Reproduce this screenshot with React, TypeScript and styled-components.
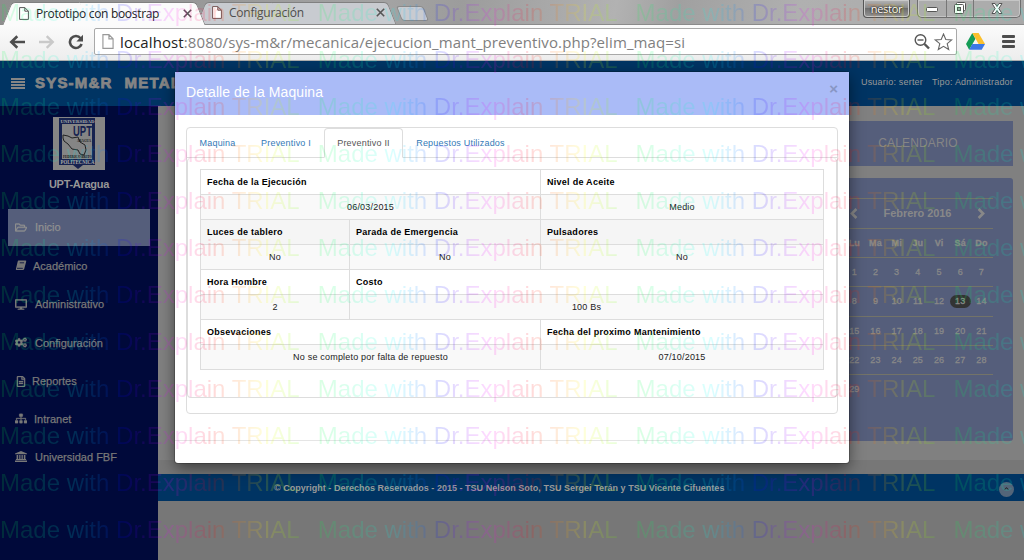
import React from 'react';
import styled, { createGlobalStyle } from 'styled-components';
import { FaRegFolderOpen, FaDesktop, FaCogs, FaRegFileAlt, FaSitemap, FaChevronUp } from 'react-icons/fa';

const Global = createGlobalStyle`
  * { box-sizing: border-box; }
  body { margin: 0; overflow: hidden; font-family: "Liberation Sans", Arial, sans-serif; }
`;
const Screen = styled.div`
  position: relative; width: 1024px; height: 560px; overflow: hidden;
  display: flex; flex-direction: column; background: #777;
`;

/* Browser window */
const TabStrip = styled.div`
  height: 25px; flex: none; display: flex; align-items: flex-start; padding-left: 7px;
  background: linear-gradient(100deg, #8e8e8e 0, #a3a3a3 38%, #9c9c9c 45%, #b2b2b2 60%, #a0a0a0 66%, #b0b0b0 78%, #a8a8a8 100%);
  border-bottom: 1px solid #8b8b8b;
  font-family: "Open Sans", "Liberation Sans", sans-serif;
`;
const BrowserTab = styled.div<{ $active?: boolean; $w: number }>`
  position: relative; z-index: ${p => (p.$active ? 2 : 1)};
  width: ${p => p.$w}px; height: ${p => (p.$active ? 23 : 22)}px; margin-top: 2px;
  display: flex; align-items: center; padding: 0 0 1px ${p => (p.$active ? 12 : 11)}px;
  font-size: 12px; letter-spacing: ${p => (p.$active ? '-0.31px' : '-0.24px')};
  color: ${p => (p.$active ? '#222' : '#4d4d4d')};
  &::before, &::after {
    content: ''; position: absolute; z-index: -1; top: 0; bottom: 0;
    background: ${p => (p.$active ? '#fbfbfb' : '#c8cbd0')}; border-top: 1px solid #808080;
  }
  &::before { left: 0; width: 60%; transform: skewX(-22deg); border-left: 1px solid #808080; border-radius: 4px 0 0 0; }
  &::after { right: 0; width: 60%; transform: skewX(22deg); border-right: 1px solid #808080; border-radius: 0 4px 0 0; }
`;
const TabLabel = styled.span`flex: 1; margin-left: 7px; white-space: nowrap;`;
const TabClose = styled.svg<{ $right: number }>`width: 9px; height: 9px; margin-right: ${p => p.$right}px;`;
const NewTab = styled.div`
  width: 27px; height: 15px; margin: 6px 0 0 7px; transform: skewX(22deg);
  background: #c9cbd0; border: 1px solid #8a8a8a; border-radius: 3px;
`;
const WindowControls = styled.div`display: flex; margin-left: auto; padding-right: 3px; height: 18px;`;
const UserBadge = styled.div`
  width: 47px; height: 18px; margin-right: 7px; border: 1px solid #555; border-top: 0; border-radius: 0 0 4px 4px;
  background: linear-gradient(#b5b5b5, #8a8a8a 45%, #6d6d6d 50%, #969696); color: #fff; text-align: center;
  font-size: 11px; letter-spacing: -0.3px; line-height: 17px; text-shadow: 0 0 2px #222, 0 0 2px #222; box-shadow: inset 0 0 0 1px #c9c9c9;
`;
const WindowButtons = styled.div`
  display: flex; height: 18px; border: 1px solid #6f6f6f; border-top: 0; border-radius: 0 0 5px 5px;
  box-shadow: inset 0 0 0 1px #c5c5c5; background: #acacac;
`;
const WindowButton = styled.div<{ $w: number; $drop?: number }>`
  width: ${p => p.$w}px; display: flex; align-items: center; justify-content: center; padding: ${p => p.$drop || 0}px 0 1px;
  & + & { border-left: 1px solid #777; }
`;
const Toolbar = styled.div`
  height: 36px; flex: none; display: flex; align-items: center; padding: 0 0 2px 9px;
  background: linear-gradient(#fbfbfb, #ededed); border-bottom: 1px solid #adadad;
`;
const NavIcon = styled.svg<{ $gap: number }>`width: 16px; height: 16px; margin-right: ${p => p.$gap}px; flex: none;`;
const AddressBar = styled.div`
  width: 863px; height: 27px; flex: none; display: flex; align-items: center; padding: 0 3px 0 7px;
  border: 1px solid #a9a9a9; border-radius: 2px; background: #fff;
  font-family: "Open Sans", "Liberation Sans", sans-serif; font-size: 15px; color: #808080;
`;
const Url = styled.span`flex: 1; margin-left: 6px; letter-spacing: 0.105px; white-space: nowrap; b { font-weight: 400; color: #222; }`;
const BarIcon = styled.svg`flex: none;`;

/* Application */
const Header = styled.header`
  height: 45px; flex: none; display: flex; align-items: center; background: #003463; color: #858585;
  padding: 0 11px 2px 11px;
`;
const Brand = styled.div`
  display: flex; align-items: center; font-size: 15px; font-weight: 700; letter-spacing: 1.2px; white-space: pre; width: 300px;
  -webkit-text-stroke: 0.8px #858585;
  svg { width: 14px; height: 11px; margin: 2px 10px 0 0; flex: none; }
`;
const BrandName = styled.span`margin-right: 12px;`;
const Avatar = styled.div`
  width: 26px; height: 26px; margin: 6px 13px 0 auto; border-radius: 50%; background: #777;
  display: flex; justify-content: center; padding-top: 4px;
  &::after { content: ''; width: 9px; height: 10px; border-radius: 50%; background: #222; }
`;
const UserInfo = styled.div`display: flex; gap: 9px; font-size: 9px; letter-spacing: 0.2px; color: #999; padding-bottom: 1px;`;
const Body = styled.div`flex: 1; min-height: 0; display: flex;`;
const Sidebar = styled.nav`
  width: 158px; flex: none; background: #00093a; color: #787878; display: flex; flex-direction: column; align-items: center; padding-top: 11px;
`;
const Logo = styled.svg`width: 52px; height: 53px; flex: none;`;
const School = styled.div`margin: 8px 0 19px; height: 12px; line-height: 12px; font-size: 11px; letter-spacing: -0.28px; font-weight: 700; color: #969696;`;
const NavItem = styled.a<{ $active?: boolean; $gap: number; $h: number }>`
  width: 142px; height: ${p => p.$h}px; flex: none; display: flex; align-items: center; padding: 0 0 1px 7px; gap: ${p => p.$gap}px;
  font-size: 11px; color: ${p => (p.$active ? '#909090' : '#787878')};
  background: ${p => (p.$active ? '#555e7b' : 'transparent')}; -webkit-text-stroke: 0.25px currentColor;
  svg { width: 12px; height: 11px; flex: none; stroke: currentColor; stroke-width: 14px; }
  svg.fine { stroke-width: 0; }
`;
const Main = styled.main`flex: 1; display: flex; flex-direction: column; background: #777;`;
const Content = styled.div`
  height: 354px; flex: none; display: flex; flex-direction: column; align-items: flex-end; padding: 15px 11px 0 0; background: #808080;
`;
const CardTitle = styled.div`
  width: 190px; height: 45px; background: #555e7b; color: #858585; font-size: 12px; letter-spacing: 0.15px;
  display: flex; align-items: center; justify-content: center; padding: 0 0 2px 0;
`;
const CalendarCard = styled.div`
  width: 190px; height: 263px; margin-top: 12px; padding: 20px 20px 0; background: #555e7b; border-radius: 3px; color: #888;
`;
const Month = styled.div`
  height: 30px; display: flex; align-items: center; justify-content: space-between; padding: 0 7px 1px 6px;
  font-size: 11px; font-weight: 700; letter-spacing: -0.05px; border-top: 1px solid #737368; svg { width: 9px; height: 11px; }
`;
const Week = styled.div<{ $bold?: boolean; $tall?: boolean }>`
  height: ${p => (p.$tall ? 30 : 29)}px; display: grid; grid-template-columns: repeat(7, 21.2px); justify-content: end; align-items: center;
  padding: 0 1px 0 0; margin-left: -10px;
  text-align: center; font-size: 9px; letter-spacing: 0.15px; font-weight: ${p => (p.$bold ? 700 : 400)}; border-top: 1px solid #737368;
`;
const Day = styled.span<{ $today?: boolean }>`
  justify-self: center; line-height: 13px; -webkit-text-stroke: 0.3px currentColor;
  ${p => p.$today && 'background:#333;color:#888;border-radius:7px;width:21px;'}
`;
const Footer = styled.footer`
  height: 27px; margin-top: 14px; flex: none; display: flex; align-items: center; justify-content: space-between;
  padding: 0 10px 0 116px; background: #003463; color: #999; font-size: 9px; font-weight: 700; letter-spacing: 0.02px; white-space: nowrap;
`;
const BackToTop = styled.div`
  width: 15px; height: 15px; margin-top: 3px; border-radius: 50%; background: #536579; color: #222;
  display: flex; align-items: center; justify-content: center; padding-bottom: 2px; svg { width: 5px; height: 5px; }
`;

/* Machine detail dialog */
const Modal = styled.section`
  position: absolute; z-index: 5; left: 175px; top: 72px; width: 674px; height: 391px;
  display: flex; flex-direction: column; background: #fff; border-radius: 3px;
  box-shadow: 0 0 0 1px rgba(0,0,0,.2), 0 5px 15px rgba(0,0,0,.5);
`;
const ModalHeader = styled.div`
  height: 43px; flex: none; display: flex; align-items: center; justify-content: space-between; padding: 0 11px 3px;
  background: #aabbf7; color: #fff; font-size: 14px; letter-spacing: 0.08px;
`;
const Close = styled.span`color: #8896c4; font-size: 15px; font-weight: 700; line-height: 15px; padding-bottom: 8px;`;
const Panel = styled.div`
  width: 652px; height: 287px; margin: 12px 0 0 11px; border: 1px solid #ddd; border-radius: 4px; flex: none;
`;
const Tabs = styled.div`height: 30px; display: flex; border-bottom: 1px solid #ddd;`;
const Tab = styled.div<{ $w: number; $active?: boolean }>`
  width: ${p => p.$w}px; height: 30px; padding-bottom: 1px; display: flex; align-items: center; justify-content: center;
  font-size: 9px; letter-spacing: 0.2px; white-space: nowrap; color: ${p => (p.$active ? '#555' : '#337ab7')};
  border: 1px solid ${p => (p.$active ? '#ddd' : 'transparent')}; border-bottom-color: ${p => (p.$active ? '#fff' : 'transparent')};
  border-radius: 4px 4px 0 0;
`;
const TabContent = styled.div`height: 240px; padding: 11px 12px; border: 1px solid #ddd; border-top: 0; border-radius: 4px;`;
const Table = styled.table`
  width: 624px; table-layout: fixed; border-collapse: collapse; font-size: 9px; color: #222;
  th, td { height: 25px; padding: 0 6px; border: 1px solid #ddd; line-height: 12px; white-space: nowrap; }
  th { text-align: left; letter-spacing: 0.27px; color: #000; }
  td { text-align: center; letter-spacing: 0.2px; background: #f9f9f9; }
`;
const Row = styled.tr<{ $hover?: boolean }>`background: ${p => (p.$hover ? '#f5f5f5' : '#fff')};`;
const ModalFooter = styled.div`margin-top: 26px; flex: 1; border-top: 1px solid #e5e5e5;`;

/* Tiled trial watermark */
const Watermark = styled.div`
  position: absolute; z-index: 10; inset: 0; overflow: hidden; pointer-events: none; opacity: 0.14;
`;
const MarkRow = styled.div`display: flex; height: 47px;`;
const Mark = styled.span`
  flex: none; width: 317.8px; height: 47px; font-size: 24px; line-height: 25px; white-space: nowrap; color: transparent;
  background: linear-gradient(90deg, #00ff40 0, #00ff80 25px, #00ffff 75px, #0080ff 100px, #0000ff 122px, #8000ff 145px, #ff00ff 172px, #ff0080 192px, #ff0000 213px, #ff8000 240px, #ffff00 265px, #80ff00 295px, #00ff00 318px);
  -webkit-background-clip: text; background-clip: text;
`;

const PageIcon = ({ w = 10, h = 13, c = '#555' }) => (
  <BarIcon width={w} height={h} viewBox="0 0 10 13" fill="#fff" stroke={c}><path d="M.6.6h5.2l3.6 3.6v8.2H.6zM5.8.6v3.6h3.6" /></BarIcon>
);
const CloseIcon = ({ right = 9 }) => <TabClose $right={right} viewBox="0 0 9 9" stroke="#555" strokeWidth="1.6"><path d="M.8.8l7.4 7.4M8.2.8L.8 8.2" /></TabClose>;
const MenuBars = () => (
  <svg viewBox="0 0 14 11" fill="currentColor" shapeRendering="crispEdges"><rect width="14" height="2" /><rect y="3" width="14" height="2" /><rect y="6" width="14" height="2" /><rect y="9" width="14" height="2" /></svg>
);
const BookIcon = () => (
  <svg className="fine" viewBox="0 0 12 11"><path d="M3.4.6h7.1q1 0 .7 1L9.2 8.9q-.3 1-1.3 1H1.6q-1 0-.7-1L2.7 1.4q.2-.8.7-.8z" fill="currentColor" /><path d="M4.7 2.8h4.4M2 8.3h5.8" stroke="#00093a" strokeWidth=".8" /></svg>
);
const BankIcon = () => (
  <svg className="fine" viewBox="0 0 12 11" fill="currentColor"><path d="M6 0l6 2.4v.9H0v-.9zM1.6 3.9h1.6v4.2h1V3.9h1.3v4.2h1V3.9h1.3v4.2h1V3.9h1.6v4.2h.7v.9H.9v-.9h.7zM0 9.6h12V11H0z" /></svg>
);
const Chevron = ({ right = false }) => (
  <svg viewBox="0 0 9 11" fill="none" stroke="currentColor" strokeWidth="2.6"><path d={right ? 'M1.6 1l4.5 4.5L1.6 10' : 'M7.4 1L2.9 5.5 7.4 10'} /></svg>
);

const navItems: { label: string; icon: React.ReactNode; gap: number; h: number; active?: boolean }[] = [
  { label: 'Inicio', icon: <FaRegFolderOpen />, gap: 8, h: 37, active: true },
  { label: 'Académico', icon: <BookIcon />, gap: 6, h: 40 },
  { label: 'Administrativo', icon: <FaDesktop />, gap: 8, h: 37 },
  { label: 'Configuración', icon: <FaCogs />, gap: 8, h: 40 },
  { label: 'Reportes', icon: <FaRegFileAlt />, gap: 5, h: 37 },
  { label: 'Intranet', icon: <FaSitemap />, gap: 7, h: 38 },
  { label: 'Universidad FBF', icon: <BankIcon />, gap: 8, h: 38 },
];
const weeks = [[1, 2, 3, 4, 5, 6, 7], [8, 9, 10, 11, 12, 13, 14], [15, 16, 17, 18, 19, 20, 21], [22, 23, 24, 25, 26, 27, 28], [29]];

export default function App() {
  return (
    <Screen>
      <Global />
      <TabStrip>
        <BrowserTab $active $w={194}><PageIcon /><TabLabel>Prototipo con boostrap</TabLabel><CloseIcon /></BrowserTab>
        <BrowserTab $w={191}><PageIcon c="#775555" /><TabLabel>Configuración</TabLabel><CloseIcon right={7} /></BrowserTab>
        <NewTab />
        <WindowControls>
          <UserBadge>nestor</UserBadge>
          <WindowButtons>
            <WindowButton $w={28} $drop={3}><svg width="12" height="5"><rect x=".5" y=".5" width="11" height="4" rx="1" fill="#fff" stroke="#555" /></svg></WindowButton>
            <WindowButton $w={27}><svg width="12" height="12" stroke="#555" fill="#fff"><rect x="2.5" y=".5" width="9" height="8" rx="1" /><rect x=".5" y="2.5" width="9" height="9" rx="1" /><rect x="3.5" y="5.5" width="3" height="3" fill="#aaa" /></svg></WindowButton>
            <WindowButton $w={47}><svg width="12" height="11" fill="#fff" stroke="#555"><path d="M1 .5h3l2 3 2-3h3L7.8 5.5l3.2 5H8L6 7.5l-2 3H1l3.2-5z" /></svg></WindowButton>
          </WindowButtons>
        </WindowControls>
      </TabStrip>
      <Toolbar>
        <NavIcon $gap={14} viewBox="0 0 16 16" fill="none" stroke="#4d4d4d" strokeWidth="2.6"><path d="M16 8H2.5M8.3 2.2L2.3 8l6 5.8" /></NavIcon>
        <NavIcon $gap={13} viewBox="0 0 16 16" fill="none" stroke="#c9c9c9" strokeWidth="2.4"><path d="M0 8h13.5M7.7 2.2l6 5.8-6 5.8" /></NavIcon>
        <NavIcon $gap={10} viewBox="0 0 16 16" fill="none" stroke="#4d4d4d" strokeWidth="2.6"><path d="M12.6 4.2A6 6 0 1 0 13.6 10" /><path d="M15 .8v6.7H8.4z" fill="#4d4d4d" stroke="none" /></NavIcon>
        <AddressBar>
          <PageIcon w={12} h={15} c="#999" />
          <Url><b>localhost</b>:8080/sys-m&amp;r/mecanica/ejecucion_mant_preventivo.php?elim_maq=si</Url>
          <BarIcon width="16" height="17" viewBox="0 0 16 17" fill="none" stroke="#555" strokeWidth="1.4"><circle cx="6.5" cy="7" r="5.3" /><path d="M3.5 7h6" /><path d="M10.5 11l4.5 4.5" strokeWidth="2.4" /></BarIcon>
          <BarIcon width="23" height="18" viewBox="-4 0 23 18" fill="#fff" stroke="#666" strokeWidth="1.1"><path d="M9.5 1l2.3 5.5 6 .4-4.6 3.8 1.5 5.8-5.2-3.2-5.2 3.2 1.5-5.8L1.2 6.9l6-.4z" /></BarIcon>
        </AddressBar>
        <BarIcon width="28" height="17" viewBox="-9 0 28 17"><path d="M6.3 0L0 11l3.2 5.7 6.3-11z" fill="#159c56" /><path d="M6.3 0h6.3L19 11h-6.4z" fill="#fbc02d" /><path d="M6.3 11H19l-3.3 5.7H3.2z" fill="#3b78e7" /></BarIcon>
        <BarIcon width="30" height="13" viewBox="-17 0 30 13" fill="#4d4d4d"><rect width="13" height="3" rx="1" /><rect y="5" width="13" height="3" rx="1" /><rect y="10" width="13" height="3" rx="1" /></BarIcon>
      </Toolbar>
      <Header>
        <Brand><MenuBars /><BrandName>SYS-M&amp;R</BrandName>METAL</Brand>
        <Avatar />
        <UserInfo><span>Usuario: serter</span><span>Tipo: Administrador</span></UserInfo>
      </Header>
      <Body>
        <Sidebar>
          <Logo viewBox="0 0 52 53">
            <rect width="52" height="53" fill="#858585" />
            <path d="M6 1h36v47H30l-5 4-5-4H6z" fill="#16224f" />
            <path d="M9 7h30v35H9z" fill="#858585" />
            <path d="M10 18l5 1 4 2 6-1 2 5 5 3 1 5-2 5-4-1-2-4-6-1-4-5-4-3-1-3z" fill="none" stroke="#222" />
            <g fontFamily="Liberation Serif, serif" fontWeight="700" textAnchor="middle">
              <text x="24.5" y="5.8" fontSize="5" fill="#aaa" textLength="34" lengthAdjust="spacingAndGlyphs">UNIVERSIDAD</text>
              <text x="29.5" y="19" fontSize="15" fill="#16224f" fontFamily="Liberation Sans, sans-serif" textLength="19" lengthAdjust="spacingAndGlyphs">UPT</text>
              <text x="31" y="24.5" fontSize="4.5" fill="#111" textLength="14" lengthAdjust="spacingAndGlyphs">ARAGUA</text>
              <text x="24.5" y="41" fontSize="3.5" fill="#111" textLength="29" lengthAdjust="spacingAndGlyphs">FEDERICO BRITO</text>
              <text x="24.5" y="47" fontSize="5.5" fill="#aaa" textLength="34" lengthAdjust="spacingAndGlyphs">POLITECNICA</text>
            </g>
          </Logo>
          <School>UPT-Aragua</School>
          {navItems.map(n => <NavItem key={n.label} $active={n.active} $gap={n.gap} $h={n.h}>{n.icon}{n.label}</NavItem>)}
        </Sidebar>
        <Main>
          <Content>
            <CardTitle>CALENDARIO</CardTitle>
            <CalendarCard>
              <Month><Chevron /><span>Febrero 2016</span><Chevron right /></Month>
              <Week $bold>{['Lu', 'Ma', 'Mi', 'Ju', 'Vi', 'Sá', 'Do'].map(d => <Day key={d}>{d}</Day>)}</Week>
              {weeks.map((w, i) => <Week key={i} $tall={i === 1}>{w.map(d => <Day key={d} $today={d === 13}>{d}</Day>)}</Week>)}
            </CalendarCard>
          </Content>
          <Footer>
            <span>© Copyright - Derechos Reservados - 2015 - TSU Nelson Soto, TSU Sergei Terán y TSU Vicente Cifuentes</span>
            <BackToTop><FaChevronUp /></BackToTop>
          </Footer>
        </Main>
      </Body>
      <Modal>
        <ModalHeader><span>Detalle de la Maquina</span><Close>×</Close></ModalHeader>
        <Panel>
          <Tabs>
            <Tab $w={61}>Maquina</Tab><Tab $w={76}>Preventivo I</Tab><Tab $w={79} $active>Preventivo II</Tab><Tab $w={115}>Repuestos Utilizados</Tab>
          </Tabs>
          <TabContent>
            <Table>
              <colgroup><col width="149" /><col width="191" /><col width="283" /></colgroup>
              <tbody>
                <Row><th colSpan={2}>Fecha de la Ejecución</th><th>Nivel de Aceite</th></Row>
                <Row><td colSpan={2}>06/03/2015</td><td>Medio</td></Row>
                <Row $hover><th>Luces de tablero</th><th>Parada de Emergencia</th><th>Pulsadores</th></Row>
                <Row><td>No</td><td>No</td><td>No</td></Row>
                <Row><th>Hora Hombre</th><th colSpan={2}>Costo</th></Row>
                <Row><td>2</td><td colSpan={2}>100 Bs</td></Row>
                <Row><th colSpan={2}>Obsevaciones</th><th>Fecha del proximo Mantenimiento</th></Row>
                <Row><td colSpan={2}>No se completo por falta de repuesto</td><td>07/10/2015</td></Row>
              </tbody>
            </Table>
          </TabContent>
        </Panel>
        <ModalFooter />
      </Modal>
      <Watermark>
        {Array.from({ length: 12 }, (_, r) => (
          <MarkRow key={r}>{[0, 1, 2, 3].map(i => <Mark key={i}>Made with Dr.Explain TRIAL</Mark>)}</MarkRow>
        ))}
      </Watermark>
    </Screen>
  );
}
